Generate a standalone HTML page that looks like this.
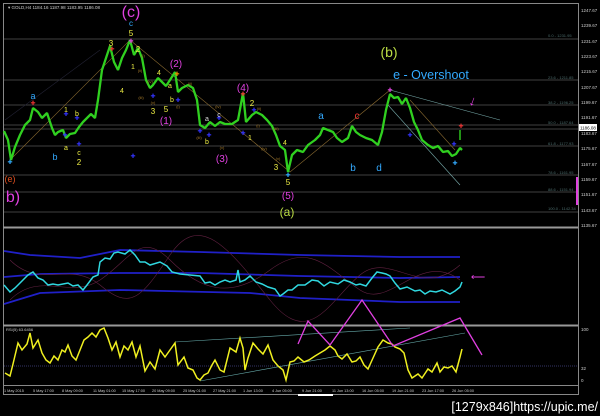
<!DOCTYPE html>
<html><head><meta charset="utf-8"><style>
html,body{margin:0;padding:0;background:#000;width:600px;height:416px;overflow:hidden}
svg{display:block}
text{font-family:"Liberation Sans",sans-serif}
</style></head><body>
<svg width="600" height="416" viewBox="0 0 600 416" xmlns="http://www.w3.org/2000/svg">
<rect width="600" height="416" fill="#000"/>
<rect x="3.5" y="3.5" width="575" height="391" fill="none" stroke="#888" stroke-width="1"/>
<line x1="3" y1="227.5" x2="578" y2="227.5" stroke="#999" stroke-width="2"/>
<line x1="3" y1="325.5" x2="578" y2="325.5" stroke="#999" stroke-width="2"/>
<line x1="3" y1="385.5" x2="578" y2="385.5" stroke="#888"/>
<g stroke="#555" stroke-width="0.7">
<line x1="4" y1="39" x2="578" y2="39"/><line x1="4" y1="80" x2="578" y2="80"/>
<line x1="4" y1="105" x2="578" y2="105"/><line x1="4" y1="125" x2="578" y2="125"/>
<line x1="4" y1="129" x2="578" y2="129"/>
<line x1="4" y1="146" x2="578" y2="146"/><line x1="4" y1="175" x2="578" y2="175"/>
<line x1="4" y1="192" x2="578" y2="192"/><line x1="4" y1="212" x2="578" y2="212"/>
</g>
<g fill="#4a6a6a" font-size="4">
<text x="548" y="37">0.0 - 1231.95</text><text x="548" y="79">23.6 - 1211.85</text>
<text x="548" y="104">38.2 - 1196.25</text><text x="548" y="124">50.0 - 1187.64</text>
<text x="548" y="145">61.8 - 1177.93</text><text x="548" y="174">78.6 - 1161.95</text>
<text x="548" y="191">88.6 - 1151.94</text><text x="548" y="210">100.0 - 1142.34</text>
</g>
<g fill="#ccc" font-size="4.5">
<text x="581" y="12">1247.67</text><text x="581" y="27">1239.67</text><text x="581" y="43">1231.67</text>
<text x="581" y="58">1223.67</text><text x="581" y="73">1215.67</text><text x="581" y="89">1207.67</text>
<text x="581" y="104">1199.67</text><text x="581" y="119">1191.67</text><text x="581" y="135">1183.67</text>
<text x="581" y="150">1175.67</text><text x="581" y="166">1167.67</text><text x="581" y="181">1159.67</text>
<text x="581" y="196">1151.67</text><text x="581" y="212">1143.67</text><text x="581" y="227">1135.67</text>
<text x="581" y="331">100</text><text x="581" y="370">32</text><text x="581" y="382">0</text>
</g>
<rect x="579" y="124" width="18" height="7" fill="#fff"/>
<text x="580" y="129.5" font-size="4.5" fill="#000">1186.08</text>
<rect x="576" y="177" width="2" height="28" fill="#e040e0"/>
<text x="8" y="9" font-size="4.5" fill="#ccc">▾ GOLD,H4  1184.16 1187.98 1183.95 1186.08</text>
<g fill="none" stroke-width="0.6">
<polyline points="10,160 130,40 290,172 390,90" stroke="#8a6a30"/>
<line x1="390" y1="90" x2="500" y2="120" stroke="#7aa"/>
<line x1="388" y1="105" x2="460" y2="185" stroke="#7aa"/>
<line x1="410" y1="100" x2="455" y2="150" stroke="#8a6a30"/>
<line x1="5" y1="120" x2="100" y2="50" stroke="#223"/>
</g>
<polyline fill="none" stroke="#30d020" stroke-width="2.3" stroke-linejoin="bevel" points="4,131 8,140 11,160 15,147 20,135 25,125 30,120 33,108 38,112 42,118 47,113 52,128 55,135 58,132 63,130 66,138 70,134 75,133 79,127 83,122 87,118 91,114 95,118 98,100 102,70 106,58 110,46 114,62 118,70 122,58 126,50 130,40 134,55 138,48 142,58 146,80 150,88 153,85 158,78 162,82 166,86 170,80 175,72 178,92 182,88 188,85 193,88 197,100 200,125 205,128 210,122 215,126 220,122 225,124 232,124 238,120 243,93 246,122 252,115 256,112 262,115 267,120 272,126 276,135 280,146 285,150 288,172 292,155 297,150 303,152 308,145 315,140 320,135 323,128 328,130 333,132 337,138 342,142 348,138 352,126 356,132 360,135 366,138 372,140 378,145 382,132 386,110 390,94 394,98 398,97 402,104 406,98 410,108 414,122 418,130 422,140 428,145 433,148 438,146 443,152 448,151 452,156 456,154 460,148 462,150"/>
<line x1="460" y1="130" x2="460" y2="140" stroke="#30d020" stroke-width="1.4"/>
<g font-size="6" text-anchor="middle">
<text x="10" y="164" fill="#3af">✚</text><text x="33" y="105" fill="#e33">✚</text>
<text x="66" y="116" fill="#33f">✚</text><text x="77" y="120" fill="#33f">✚</text>
<text x="65" y="137" fill="#33f">✚</text><text x="79" y="146" fill="#33f">✚</text>
<text x="112" y="51" fill="#e33">✚</text><text x="131" y="43" fill="#d4d">✚</text>
<text x="153" y="98" fill="#33f">✚</text><text x="177" y="76" fill="#e80">✚</text>
<text x="178" y="102" fill="#33f">✚</text><text x="200" y="133" fill="#33f">✚</text>
<text x="209" y="137" fill="#33f">✚</text><text x="219" y="120" fill="#33f">✚</text>
<text x="243" y="96" fill="#e33">✚</text><text x="243" y="135" fill="#33f">✚</text>
<text x="254" y="112" fill="#33f">✚</text><text x="288" y="177" fill="#3af">✚</text>
<text x="390" y="92" fill="#d4d">✚</text><text x="461" y="128" fill="#e33">✚</text>
<text x="455" y="165" fill="#3af">✚</text><text x="454" y="146" fill="#33f">✚</text>
<text x="133" y="158" fill="#33f">✚</text><text x="410" y="137" fill="#33f">✚</text>
</g>
<g text-anchor="middle">
<text x="131" y="17" font-size="16" fill="#e040e0">(c)</text>
<text x="131" y="26" font-size="8" fill="#3af">c</text>
<text x="131" y="36" font-size="8" fill="#ee4">5</text>
<text x="111" y="46" font-size="8" fill="#ee4">3</text>
<text x="138" y="52" font-size="8" fill="#ee4">2</text>
<text x="133" y="69" font-size="7" fill="#ee4">1</text>
<text x="122" y="93" font-size="7" fill="#ee4">4</text>
<text x="176" y="67" font-size="10" fill="#e040e0">(2)</text>
<text x="243" y="91" font-size="10" fill="#e040e0">(4)</text>
<text x="166" y="124" font-size="10" fill="#e040e0">(1)</text>
<text x="222" y="162" font-size="10" fill="#e040e0">(3)</text>
<text x="288" y="199" font-size="10" fill="#e040e0">(5)</text>
<text x="287" y="216" font-size="12" fill="#bd4">(a)</text>
<text x="10" y="182" font-size="9" fill="#e05020">(e)</text>
<text x="13" y="202" font-size="16" fill="#e040e0">b)</text>
<text x="33" y="99" font-size="9" fill="#3af">a</text>
<text x="55" y="160" font-size="9" fill="#3af">b</text>
<text x="66" y="112" font-size="7" fill="#ee4">1</text>
<text x="77" y="116" font-size="7" fill="#ee4">b</text>
<text x="66" y="150" font-size="7" fill="#ee4">a</text>
<text x="79" y="155" font-size="7" fill="#ee4">c</text>
<text x="79" y="165" font-size="8" fill="#ee4">2</text>
<text x="153" y="114" font-size="8" fill="#ee4">3</text>
<text x="159" y="75" font-size="7" fill="#ee4">4</text>
<text x="170" y="88" font-size="7" fill="#ee4">a</text>
<text x="166" y="112" font-size="8" fill="#ee4">5</text>
<text x="172" y="102" font-size="7" fill="#ee4">b</text>
<text x="207" y="121" font-size="7" fill="#ddd">a</text>
<text x="207" y="144" font-size="7" fill="#ee4">b</text>
<text x="219" y="117" font-size="7" fill="#ddd">c</text>
<text x="252" y="106" font-size="8" fill="#ee4">2</text>
<text x="250" y="140" font-size="7" fill="#ee4">1</text>
<text x="285" y="145" font-size="7" fill="#ee4">4</text>
<text x="276" y="170" font-size="8" fill="#ee4">3</text>
<text x="288" y="185" font-size="8" fill="#ee4">5</text>
<text x="389" y="57" font-size="14" fill="#bd4">(b)</text>
<text x="431" y="79" font-size="12.5" fill="#3af">e - Overshoot</text>
<text x="321" y="119" font-size="10" fill="#3af">a</text>
<text x="357" y="119" font-size="10" fill="#e33">c</text>
<text x="353" y="171" font-size="10" fill="#3af">b</text>
<text x="379" y="171" font-size="10" fill="#3af">d</text>
</g>
<g font-size="4" fill="#a67a2a" text-anchor="middle">
<text x="143" y="57">(i)</text><text x="140" y="72">(ii)</text><text x="150" y="83">(iv)</text>
<text x="141" y="99">(iii)</text><text x="153" y="104">(v)</text><text x="178" y="108">(i)</text>
<text x="190" y="85">(ii)</text><text x="199" y="139">(iii)</text><text x="218" y="108">(iv)</text>
<text x="222" y="149">(v)</text><text x="259" y="110">(ii)</text><text x="258" y="127">(i)</text>
<text x="276" y="130">(iii)</text><text x="264" y="150">(iv)</text><text x="278" y="160">(v)</text>
</g>
<text x="468" y="104" font-size="14" fill="#e040e0" transform="rotate(20 468 104)">↓</text>
<g fill="none" stroke="#2020c8" stroke-width="1.8">
<polyline points="4,251 30,255 80,258 120,250 200,252 300,255 400,257 460,257"/>
<polyline points="4,277 40,274 120,273 200,273 300,276 400,278 460,277"/>
<polyline points="4,304 40,293 120,290 250,293 300,298 400,302 460,302"/>
</g>
<g fill="none" stroke="#602040" stroke-width="0.6">
<path d="M10,300 C40,270 70,300 100,280 S140,230 170,260 S230,300 270,270 S330,270 360,290 S420,250 460,280"/>
<path d="M10,260 C40,290 70,260 100,285 S140,300 170,255 S230,250 270,300 S330,300 360,275 S420,300 460,265"/>
</g>
<polyline fill="none" stroke="#30d8e0" stroke-width="1.5" points="4,285 10,292 15,288 20,283 28,275 33,272 38,278 43,280 48,285 53,284 58,285 63,284 68,283 73,286 78,285 83,290 87,285 93,277 98,275 100,262 105,258 110,259 114,253 118,252 125,254 130,250 135,255 140,262 145,262 150,265 160,262 167,266 172,272 180,274 190,275 200,276 205,283 210,282 215,285 220,282 225,280 230,282 236,280 238,270 240,282 245,280 250,276 256,282 262,284 268,287 275,289 280,296 283,294 288,290 292,290 298,285 305,285 312,280 318,281 324,286 330,282 338,284 344,280 350,282 356,285 360,284 366,286 372,278 377,272 382,273 386,274 390,276 395,283 400,289 407,287 415,291 420,290 425,294 430,291 436,292 442,290 450,294 455,291 460,287 462,282"/>
<text x="478" y="280" font-size="10" fill="#e040e0" text-anchor="middle">⟵</text>
<line x1="4" y1="366" x2="578" y2="366" stroke="#336" stroke-dasharray="1,1"/>
<text x="6" y="331" font-size="4" fill="#ccc">RSI(5) 63.6456</text>
<g fill="none" stroke="#6aa" stroke-width="0.6">
<line x1="175" y1="342" x2="410" y2="328"/>
<line x1="200" y1="381" x2="465" y2="333"/>
</g>
<polyline fill="none" stroke="#f0f020" stroke-width="1.5" points="5,373 10,376 13,364 18,343 22,350 27,344 30,333 33,348 38,340 42,353 46,360 50,363 54,356 58,360 62,350 65,352 68,345 72,356 76,360 80,350 84,340 88,337 92,333 96,337 100,330 104,328 108,338 112,350 116,342 120,357 124,346 128,350 132,342 136,357 140,346 145,371 150,362 155,369 160,350 165,357 170,350 175,343 178,365 184,357 188,368 193,370 197,378 200,380 204,375 208,373 212,365 215,360 220,370 224,372 230,348 236,352 240,338 243,348 245,370 248,358 253,343 258,349 263,354 268,345 273,360 278,366 283,370 286,380 290,362 294,361 298,357 304,362 309,360 315,356 320,353 325,350 330,346 335,350 338,356 342,359 347,354 352,362 356,361 360,357 364,365 368,369 373,358 378,347 383,340 388,343 392,344 395,347 400,349 404,353 408,370 412,378 418,374 422,378 428,369 432,372 437,363 440,372 444,367 448,368 452,366 456,372 460,357 462,349"/>
<polyline fill="none" stroke="#e040e0" stroke-width="1.3" points="298,344 308,321 330,345 362,300 393,346 460,318 482,355"/>
<g font-size="3.8" fill="#ccc">
<text x="4" y="392">1 May 2015</text><text x="33" y="392">5 May 17:00</text><text x="62" y="392">8 May 09:00</text>
<text x="93" y="392">11 May 01:00</text><text x="122" y="392">15 May 17:00</text><text x="152" y="392">20 May 09:00</text>
<text x="183" y="392">25 May 01:00</text><text x="213" y="392">27 May 21:00</text><text x="243" y="392">1 Jun 13:00</text>
<text x="272" y="392">4 Jun 05:00</text><text x="302" y="392">9 Jun 21:00</text><text x="332" y="392">11 Jun 13:00</text>
<text x="362" y="392">16 Jun 05:00</text><text x="392" y="392">19 Jun 21:00</text><text x="422" y="392">23 Jun 17:00</text>
<text x="452" y="392">26 Jun 05:00</text>
</g>
<rect x="298" y="394" width="35" height="2" fill="#fff"/>
<text x="598" y="411" font-size="12.5" fill="#fff" text-anchor="end" font-family="Liberation Sans Narrow,Liberation Sans,sans-serif">[1279x846]https://upic.me/</text>
</svg>
</body></html>
